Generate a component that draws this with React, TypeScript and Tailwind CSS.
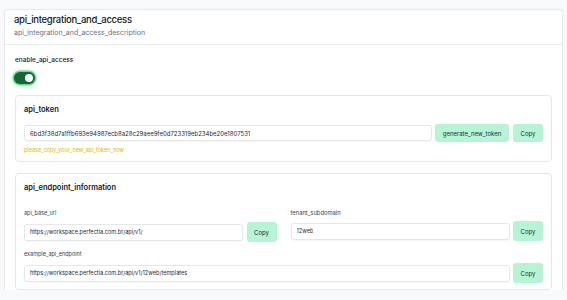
import React from 'react'

const font = { fontFamily: 'Inter, "Noto Sans", sans-serif' }

function CopyButton({ label = 'Copy', className = '' }: { label?: string; className?: string }) {
  return (
    <button
      className={`h-[18px] shrink-0 rounded-[3px] bg-[#b5f5d6] text-[6px] font-normal text-[#1f2937] ${className}`}
    >
      {label}
    </button>
  )
}

function Field({ value, h = 'h-[16px]', size = 'text-[5.6px]' }: { value: string; h?: string; size?: string }) {
  return (
    <div className={`flex ${h} min-w-0 flex-1 items-center rounded-[3px] border border-[#e5e7eb] bg-white px-[5px] ${size} text-[#1f2937] shadow-[0_1px_1px_rgba(0,0,0,0.03)]`}>
      <span className="truncate">{value}</span>
    </div>
  )
}

export default function App() {
  return (
    <div className="h-[300px] w-[567px] overflow-hidden bg-[#f8f9fb] pl-[4px] pr-[4px] pt-[9px]" style={font}>
      <div className="rounded-t-[4px] border border-b-0 border-[#e5e7eb] bg-white">
        {/* header */}
        <div className="border-b border-[#eceef1] px-[9px] pb-[4px] pt-[4px]">
          <h2 className="text-[9.5px] font-medium leading-[12px] tracking-[-0.03em] text-[#111827]">api_integration_and_access</h2>
          <p className="text-[7px] leading-[14px] text-[#6b7280]">api_integration_and_access_description</p>
        </div>

        <div className="px-[9px] pt-[9px]">
          <div className="pl-[1px] text-[6.5px] font-medium leading-[12px] text-[#111827]">enable_api_access</div>

          {/* toggle */}
          <div className="mt-[6px] flex h-[12px] w-[21px] items-center justify-end rounded-full bg-[#166534] p-[2px] shadow-[0_0_0_1.5px_rgba(34,197,94,0.55),0_0_5px_rgba(34,197,94,0.7)]">
            <div className="h-[8px] w-[8px] rounded-full bg-white" />
          </div>

          {/* token card */}
          <div className="mt-[11px] ml-[1px] mr-[1px] rounded-[4px] border border-[#e5e7eb] px-[8px] pb-[6px] pt-[8px]">
            <h3 className="text-[7.5px] font-semibold leading-[12px] text-[#111827]">api_token</h3>
            <div className="mt-[8px] flex items-center gap-[3px]">
              <Field value="6bd3f38d7a1ffb693e94987ecb8a28c29aee9fe0d723319eb234be20e1807531" size="text-[6px]" />
              <CopyButton label="generate_new_token" className="w-[74px]" />
              <CopyButton className="ml-[1px] w-[30px]" />
            </div>
            <p className="mt-[3px] text-[5.5px] leading-[10px] text-[#eab308]">please_copy_your_new_api_token_now</p>
          </div>

          {/* endpoint card */}
          <div className="mt-[11px] ml-[1px] mr-[1px] rounded-[4px] border border-[#e5e7eb] px-[8px] pb-[6px] pt-[8px]">
            <h3 className="text-[7.5px] font-semibold leading-[12px] text-[#111827]">api_endpoint_information</h3>
            <div className="mt-[14px] grid grid-cols-2 gap-x-[14px]">
              <div>
                <div className="text-[5.5px] leading-[10px] text-[#374151]">api_base_url</div>
                <div className="mt-[4px] flex items-center gap-[4px]">
                  <Field value="https://workspace.perfectia.com.br/api/v1/" h="h-[17px]" />
                  <CopyButton className="h-[20px] w-[30px]" />
                </div>
              </div>
              <div>
                <div className="text-[5.8px] leading-[10px] text-[#374151]">tenant_subdomain</div>
                <div className="mt-[3px] flex items-center gap-[3px]">
                  <Field value="12web" h="h-[17px]" />
                  <CopyButton className="h-[20px] w-[30px]" />
                </div>
              </div>
            </div>
            <div className="mt-[7px] text-[5.5px] leading-[10px] text-[#374151]">example_api_endpoint</div>
            <div className="mt-[4px] flex items-center gap-[3px]">
              <Field value="https://workspace.perfectia.com.br/api/v1/12web/templates" h="h-[17px]" />
              <CopyButton className="h-[20px] w-[30px]" />
            </div>
          </div>
        </div>
      </div>
    </div>
  )
}
